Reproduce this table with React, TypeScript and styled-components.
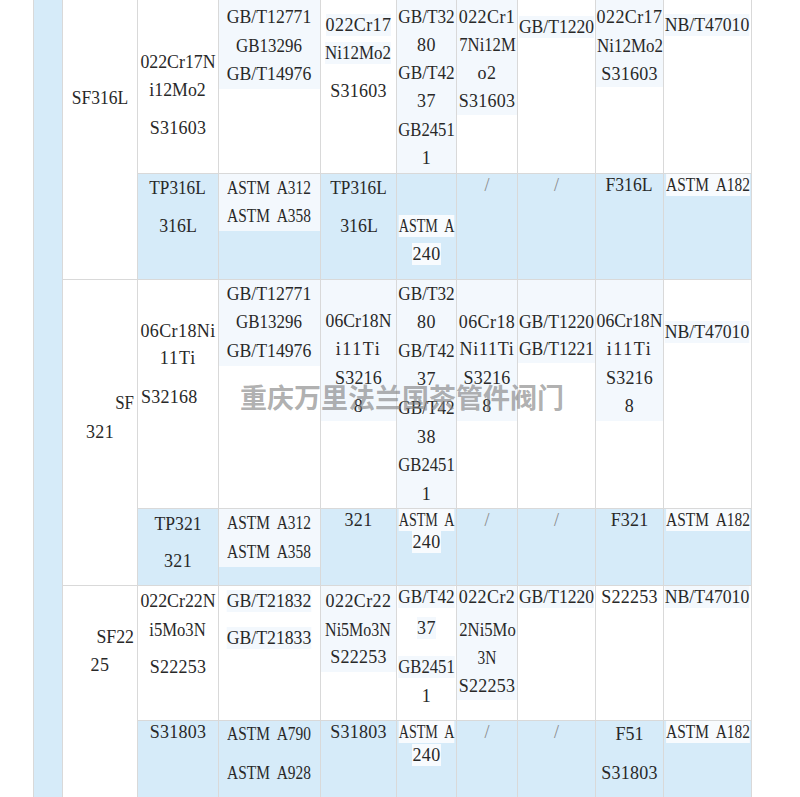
import React from "react";
import styled, { createGlobalStyle } from "styled-components";

const Global = createGlobalStyle`
  html, body { margin: 0; padding: 0; background: #ffffff; overflow: hidden; }
  body { font-family: "Liberation Serif", "DejaVu Serif", serif; }
`;

type Tone = "white" | "blue" | "soft";
type Align = "c" | "l" | "r";
type Ln = [string, number, Align?, boolean?];

interface Spec {
  col: number;
  row: number;
  span?: number;
  tone: Tone;
  top: number;
  block?: "soft" | "white";
  bottom?: number;
  slash?: boolean;
  lines: Ln[];
}

const tones: Record<string, string> = {
  white: "#ffffff",
  blue: "#d6ebf9",
  soft: "#f3f8fd",
  none: "transparent",
};

/* Times-metric advance widths (em). The original uses half-width glyphs
   (9.4px per character), so each line is fitted to that grid. */
const EM: Record<string, number> = {
  A: 0.722, B: 0.667, C: 0.667, F: 0.556, G: 0.722, L: 0.611, M: 0.889,
  N: 0.722, P: 0.556, S: 0.556, T: 0.611, i: 0.278, o: 0.5, r: 0.333,
  "/": 0.278, " ": 0.5,
};
const FONT = 18;
const CELL = 9.4;
const fit = (t: string) => {
  const natural = [...t].reduce((s, ch) => s + (EM[ch] ?? 0.5), 0) * FONT;
  const target = t.length * CELL;
  if (natural > target) return { k: target / natural, ls: 0 };
  return { k: 1, ls: (target - natural) / t.length };
};

const Page = styled.div`
  position: relative;
  width: 800px;
  height: 797px;
  overflow: hidden;
  background: #ffffff;
`;

const Table = styled.div`
  margin-left: 33px;
  width: max-content;
  display: grid;
  grid-template-columns: 28px 74px 80px 101px 75px 59px 60px 77px 67px 87px;
  grid-template-rows: 173px 105px 228px 76px 134px 76px;
  gap: 1px;
  padding: 0 1px;
  background: #d9d9d9;
`;

const Cell = styled.div<{ $col: number; $row: number; $span: number; $tone: Tone }>`
  grid-column: ${(p) => p.$col};
  grid-row: ${(p) => p.$row} / span ${(p) => p.$span};
  background: ${(p) => tones[p.$tone]};
  overflow: hidden;
`;

const Block = styled.div<{ $tone: string; $pt: number; $pb: number }>`
  background: ${(p) => tones[p.$tone]};
  padding-top: ${(p) => p.$pt}px;
  padding-bottom: ${(p) => p.$pb}px;
  display: flex;
  flex-direction: column;
`;

const Line = styled.div<{ $mt: number; $align: Align }>`
  margin-top: ${(p) => p.$mt}px;
  height: 22px;
  display: flex;
  justify-content: ${(p) => (p.$align === "l" ? "flex-start" : p.$align === "r" ? "flex-end" : "center")};
  padding-left: ${(p) => (p.$align === "l" ? 3 : 0)}px;
  padding-right: ${(p) => (p.$align === "r" ? 3 : 0)}px;
`;

const Txt = styled.span<{ $mark?: string; $faint?: boolean; $ls: number; $k: number; $align: Align }>`
  flex: none;
  display: inline-block;
  font-family: "Liberation Serif", "DejaVu Serif", serif;
  font-size: ${FONT}px;
  line-height: 22px;
  height: 22px;
  letter-spacing: ${(p) => p.$ls.toFixed(2)}px;
  word-spacing: 4.5px;
  color: ${(p) => (p.$faint ? "#8a8a8a" : "#282828")};
  background: ${(p) => (p.$mark ? p.$mark : "transparent")};
  white-space: pre;
  transform: scaleX(${(p) => p.$k.toFixed(3)});
  transform-origin: ${(p) => (p.$align === "l" ? "left" : p.$align === "r" ? "right" : "center")} center;
`;

const Watermark = styled.div`
  position: absolute;
  left: 240px;
  top: 382px;
  font-family: "Noto Sans CJK SC", "Noto Sans", sans-serif;
  font-weight: 700;
  font-size: 27px;
  line-height: 29px;
  color: rgba(125, 125, 125, 0.62);
  white-space: nowrap;
  pointer-events: none;
`;

const R = { r1: 0, r2: 174, r3: 280, r4: 509, r5: 586, r6: 721 };

const specs: Spec[] = [
  { col: 2, row: 1, span: 2, tone: "white", top: R.r1, lines: [["SF316L", 98]] },
  { col: 3, row: 1, tone: "white", top: R.r1, lines: [["022Cr17N", 62], ["i12Mo2", 90], ["S31603", 128]] },
  { col: 4, row: 1, tone: "white", top: R.r1, block: "soft", bottom: 89, lines: [["GB/T12771", 17], ["GB13296", 46], ["GB/T14976", 74]] },
  { col: 5, row: 1, tone: "white", top: R.r1, lines: [["022Cr17", 25, "c", true], ["Ni12Mo2", 53, "c", true], ["S31603", 91]] },
  { col: 6, row: 1, tone: "soft", top: R.r1, lines: [["GB/T32", 17], ["80", 45], ["GB/T42", 73], ["37", 101], ["GB2451", 130], ["1", 158]] },
  { col: 7, row: 1, tone: "white", top: R.r1, block: "soft", bottom: 115, lines: [["022Cr1", 17], ["7Ni12M", 45], ["o2", 73], ["S31603", 101]] },
  { col: 8, row: 1, tone: "white", top: R.r1, lines: [["GB/T1220", 27, "c", true]] },
  { col: 9, row: 1, tone: "white", top: R.r1, block: "soft", bottom: 87, lines: [["022Cr17", 17], ["Ni12Mo2", 46], ["S31603", 74]] },
  { col: 10, row: 1, tone: "white", top: R.r1, lines: [["NB/T47010", 25, "c", true]] },

  { col: 3, row: 2, tone: "blue", top: R.r2, lines: [["TP316L", 188], ["316L", 226]] },
  { col: 4, row: 2, tone: "blue", top: R.r2, block: "soft", bottom: 231, lines: [["ASTM A312", 188], ["ASTM A358", 216]] },
  { col: 5, row: 2, tone: "blue", top: R.r2, lines: [["TP316L", 188], ["316L", 226]] },
  { col: 6, row: 2, tone: "blue", top: R.r2, lines: [["ASTM A", 226, "c", true], ["240", 254, "c", true]] },
  { col: 7, row: 2, tone: "blue", top: R.r2, slash: true, lines: [["/", 184]] },
  { col: 8, row: 2, tone: "blue", top: R.r2, slash: true, lines: [["/", 184]] },
  { col: 9, row: 2, tone: "blue", top: R.r2, lines: [["F316L", 184]] },
  { col: 10, row: 2, tone: "blue", top: R.r2, lines: [["ASTM A182", 184, "c", true]] },

  { col: 2, row: 3, span: 2, tone: "white", top: R.r3, lines: [["SF", 403, "r"], ["321", 432]] },
  { col: 3, row: 3, tone: "white", top: R.r3, lines: [["06Cr18Ni", 331], ["11Ti", 358], ["S32168", 397, "l"]] },
  { col: 4, row: 3, tone: "white", top: R.r3, block: "soft", bottom: 366, lines: [["GB/T12771", 294], ["GB13296", 322], ["GB/T14976", 351]] },
  { col: 5, row: 3, tone: "white", top: R.r3, block: "soft", bottom: 421, lines: [["06Cr18N", 321], ["i11Ti", 349], ["S3216", 378], ["8", 406]] },
  { col: 6, row: 3, tone: "soft", top: R.r3, lines: [["GB/T32", 294], ["80", 322], ["GB/T42", 351], ["37", 379], ["GB/T42", 408], ["38", 437], ["GB2451", 465], ["1", 494]] },
  { col: 7, row: 3, tone: "white", top: R.r3, block: "soft", bottom: 421, lines: [["06Cr18", 322], ["Ni11Ti", 349], ["S3216", 378], ["8", 406]] },
  { col: 8, row: 3, tone: "white", top: R.r3, block: "soft", bottom: 363, lines: [["GB/T1220", 322], ["GB/T1221", 349]] },
  { col: 9, row: 3, tone: "white", top: R.r3, block: "soft", bottom: 421, lines: [["06Cr18N", 321], ["i11Ti", 349], ["S3216", 378], ["8", 406]] },
  { col: 10, row: 3, tone: "white", top: R.r3, lines: [["NB/T47010", 332, "c", true]] },

  { col: 3, row: 4, tone: "blue", top: R.r4, lines: [["TP321", 524], ["321", 561]] },
  { col: 4, row: 4, tone: "blue", top: R.r4, block: "soft", bottom: 567, lines: [["ASTM A312", 523], ["ASTM A358", 552]] },
  { col: 5, row: 4, tone: "blue", top: R.r4, lines: [["321", 519]] },
  { col: 6, row: 4, tone: "blue", top: R.r4, lines: [["ASTM A", 519, "c", true], ["240", 541, "c", true]] },
  { col: 7, row: 4, tone: "blue", top: R.r4, slash: true, lines: [["/", 519]] },
  { col: 8, row: 4, tone: "blue", top: R.r4, slash: true, lines: [["/", 519]] },
  { col: 9, row: 4, tone: "blue", top: R.r4, lines: [["F321", 519]] },
  { col: 10, row: 4, tone: "blue", top: R.r4, lines: [["ASTM A182", 519, "c", true]] },

  { col: 2, row: 5, span: 2, tone: "white", top: R.r5, lines: [["SF22", 637, "r"], ["25", 665]] },
  { col: 3, row: 5, tone: "white", top: R.r5, lines: [["022Cr22N", 601], ["i5Mo3N", 630], ["S22253", 667]] },
  { col: 4, row: 5, tone: "white", top: R.r5, lines: [["GB/T21832", 601, "c", true], ["GB/T21833", 638, "c", true]] },
  { col: 5, row: 5, tone: "white", top: R.r5, block: "soft", bottom: 672, lines: [["022Cr22", 601], ["Ni5Mo3N", 630], ["S22253", 657]] },
  { col: 6, row: 5, tone: "white", top: R.r5, lines: [["GB/T42", 597, "c", true], ["37", 628, "c", true], ["GB2451", 667, "c", true], ["1", 696]] },
  { col: 7, row: 5, tone: "white", top: R.r5, block: "soft", bottom: 700, lines: [["022Cr2", 597], ["2Ni5Mo", 630], ["3N", 658], ["S22253", 686]] },
  { col: 8, row: 5, tone: "white", top: R.r5, lines: [["GB/T1220", 596, "c", true]] },
  { col: 9, row: 5, tone: "white", top: R.r5, lines: [["S22253", 596]] },
  { col: 10, row: 5, tone: "white", top: R.r5, lines: [["NB/T47010", 596, "c", true]] },

  { col: 3, row: 6, tone: "blue", top: R.r6, lines: [["S31803", 731]] },
  { col: 4, row: 6, tone: "blue", top: R.r6, lines: [["ASTM A790", 734], ["ASTM A928", 773]] },
  { col: 5, row: 6, tone: "blue", top: R.r6, lines: [["S31803", 731]] },
  { col: 6, row: 6, tone: "blue", top: R.r6, lines: [["ASTM A", 731, "c", true], ["240", 754, "c", true]] },
  { col: 7, row: 6, tone: "blue", top: R.r6, slash: true, lines: [["/", 727]] },
  { col: 8, row: 6, tone: "blue", top: R.r6, slash: true, lines: [["/", 727]] },
  { col: 9, row: 6, tone: "blue", top: R.r6, lines: [["F51", 734], ["S31803", 773]] },
  { col: 10, row: 6, tone: "blue", top: R.r6, lines: [["ASTM A182", 731, "c", true]] },
];

function TableCell({ s }: { s: Spec }) {
  const first = s.lines[0][1];
  const last = s.lines[s.lines.length - 1][1];
  const markColor = s.tone === "blue" ? "#f8fbfe" : "#f3f8fd";
  return (
    <Cell $col={s.col} $row={s.row} $span={s.span ?? 1} $tone={s.tone}>
      <Block
        $tone={s.block ?? "none"}
        $pt={Math.max(0, first - 11 - s.top)}
        $pb={s.bottom ? Math.max(0, s.bottom - last - 11) : 0}
      >
        {s.lines.map((l, i) => {
          const align = l[2] ?? "c";
          const f = s.slash ? { k: 1, ls: 0 } : fit(l[0]);
          return (
            <Line key={i} $mt={i === 0 ? 0 : l[1] - s.lines[i - 1][1] - 22} $align={align}>
              <Txt $mark={l[3] ? markColor : undefined} $faint={s.slash} $ls={f.ls} $k={f.k} $align={align}>
                {l[0]}
              </Txt>
            </Line>
          );
        })}
      </Block>
    </Cell>
  );
}

export default function App() {
  return (
    <Page>
      <Global />
      <Table>
        <Cell $col={1} $row={1} $span={6} $tone="blue" />
        {specs.map((s, i) => (
          <TableCell key={i} s={s} />
        ))}
      </Table>
      <Watermark>重庆万里法兰国茶管件阀门</Watermark>
    </Page>
  );
}
